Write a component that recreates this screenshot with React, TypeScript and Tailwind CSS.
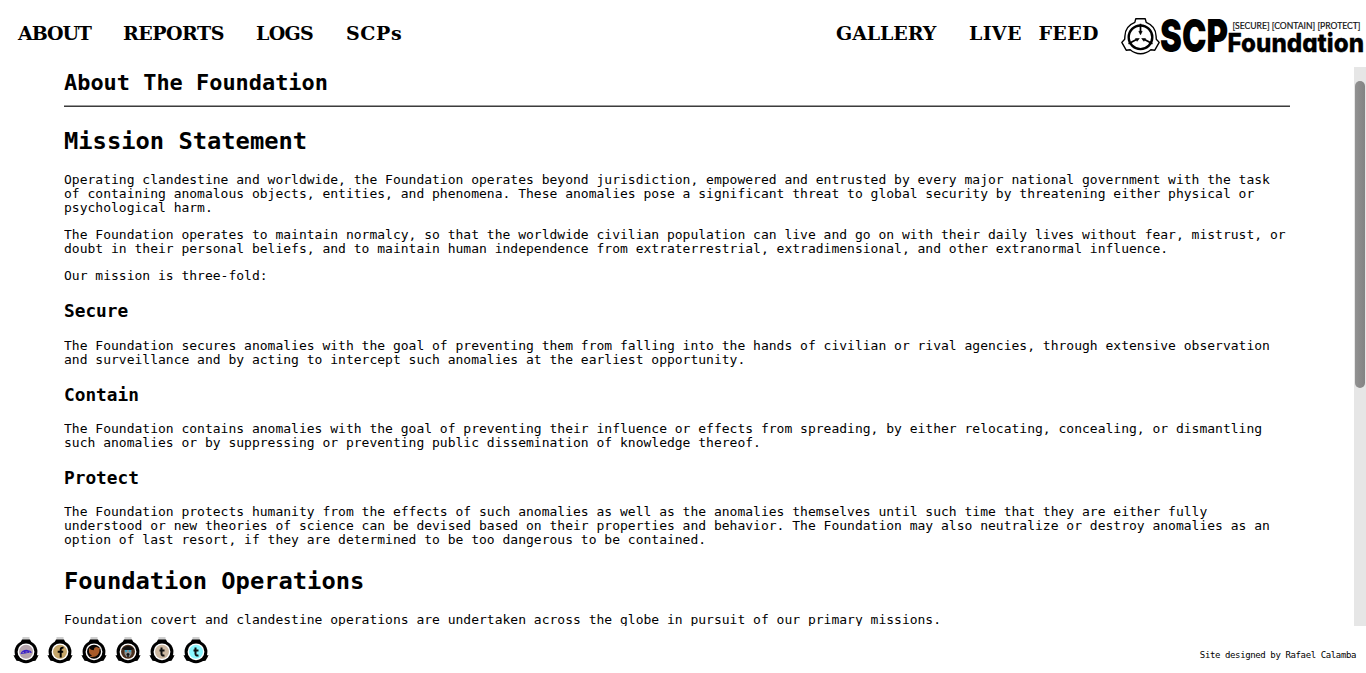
import type { ReactNode } from 'react';

const Emblem = () => (
  <g fill="none" stroke="#000" strokeLinejoin="round">
    <path
      d="M15.800.9h9.400l1 3.700c5.900 2.300 9.800 7.500 9.900 13.900l.2 2.900 2.900 3.200-4.400 7.800-4-.5c-6 5.300-14.600 5.300-20.600 0l-4 .5-4.400-7.800 2.900-3.200.2-2.900c.1-6.400 4-11.600 9.900-13.900z"
      strokeWidth="1.400"
    />
    <circle cx="20.500" cy="19.500" r="11.800" strokeWidth="2.400" />
    <g strokeWidth="1.700" fill="#000">
      <path d="M20.500 6v9M32.500 26l-8-4.400M8.500 26l8-4.400" />
      <path d="M18.800 13.500h3.400l-1.700 3.500zM25.500 20.800l-1.600 2.700-2.200-2.800zM15.500 20.800l1.600 2.700 2.200-2.800z" strokeWidth=".6" />
    </g>
  </g>
);

const Logo = () => (
  <svg width="246" height="44" viewBox="0 0 246 44" className="block overflow-visible" role="img">
    <g transform="translate(0 3.800)">
      <Emblem />
    </g>
    <text x="40" y="38.300" textLength="68" lengthAdjust="spacingAndGlyphs" fontFamily="Inter, sans-serif" fontWeight="900" fontSize="45">SCP</text>
    <text x="112.500" y="14.500" textLength="128" lengthAdjust="spacingAndGlyphs" fontFamily="Lato, sans-serif" fontSize="9.300" fontWeight="400" fill="#111" stroke="#111" strokeWidth=".2">[SECURE] [CONTAIN] [PROTECT]</text>
    <text x="107.500" y="38.300" textLength="136.500" lengthAdjust="spacingAndGlyphs" className="[font-feature-settings:'cv11','ss03']" fontFamily="Inter, sans-serif" fontWeight="800" fontSize="26" stroke="#000" strokeWidth=".3">Foundation</text>
  </svg>
);

const Badge = ({ fill, children }: { fill: string; children: ReactNode }) => (
  <svg width="26" height="28" viewBox="0 0 26 28" className="block">
    <path d="M9.500 0h7v3h-7z" fill="#cfcfcf" />
    <path d="M0 18.500h26" stroke="#bbb" strokeWidth="1" />
    <path d="M9 2.600h8l1.500 3h-11zM1.300 18.300l3.700-1 4.500 7.500-3.800-.8-2.200-.2-2.500-4.300zM24.700 18.300l-3.700-1-4.500 7.500 3.800-.8 2.200-.2 2.500-4.300z" fill="#000" />
    <circle cx="13" cy="14.800" r="11.400" fill="#000" />
    <circle cx="13" cy="14.800" r="8.400" fill="#fff" />
    <circle cx="13" cy="14.800" r="7" fill={fill} />
    {children}
  </svg>
);

const NavItem = ({ children, className }: { children: string; className: string }) => (
  <a className={`block shrink-0 whitespace-nowrap ${className}`}>{children}</a>
);

const Title = ({ children }: { children: string }) => (
  <h1 className="text-[23.75px] leading-[26px] font-bold whitespace-nowrap">{children}</h1>
);

const Sub = ({ children }: { children: string }) => (
  <h2 className="mt-[18px] text-[17.8px] leading-5 font-bold">{children}</h2>
);

const Para = ({ lines, className }: { lines: string[]; className: string }) => (
  <p className={`text-[13px] leading-[14px] tracking-[0.004px] whitespace-nowrap ${className}`}>
    {lines.map((line) => (
      <span key={line} className="block">{line}</span>
    ))}
  </p>
);

export default function App() {
  return (
    <div className="flex h-[673px] w-[1366px] flex-col overflow-hidden bg-white font-['DejaVu_Sans_Mono',monospace] text-black">
      <header className="flex h-[67px] shrink-0 items-start justify-between">
        <nav className="flex pt-[19px] pl-[18px] font-['DejaVu_Serif',serif] text-[19px] leading-7 font-bold">
          <NavItem className="w-[105px] tracking-[-1.1px]">ABOUT</NavItem>
          <NavItem className="w-[133px] tracking-[-0.5px]">REPORTS</NavItem>
          <NavItem className="w-[90px] tracking-[-0.7px]">LOGS</NavItem>
          <NavItem className="w-[70px] tracking-[0.6px]">SCPs</NavItem>
        </nav>
        <div className="flex">
          <nav className="flex pt-[19px] font-['DejaVu_Serif',serif] text-[19px] leading-7 font-bold">
            <NavItem className="w-[133px] tracking-[-0.1px]">GALLERY</NavItem>
            <NavItem className="w-[151px] tracking-[0.3px] [word-spacing:10px]">LIVE FEED</NavItem>
          </nav>
          <div className="pt-[14px]">
            <Logo />
          </div>
        </div>
      </header>
      <main className="flex h-[559px] shrink-0 justify-between overflow-hidden">
        <article className="ml-16 h-full w-[1226px] overflow-hidden pt-[2px]">
          <h1 className="text-[21.93px] leading-7 font-bold">About The Foundation</h1>
          <hr className="mt-2 h-[2px] border-t border-b border-t-[#9a9a9a] border-b-[#3c3c3c]" />
          <div className="mt-[21px]">
            <Title>Mission Statement</Title>
          </div>
          <Para
            className="mt-[19px]"
            lines={[
              'Operating clandestine and worldwide, the Foundation operates beyond jurisdiction, empowered and entrusted by every major national government with the task',
              'of containing anomalous objects, entities, and phenomena. These anomalies pose a significant threat to global security by threatening either physical or',
              'psychological harm.',
            ]}
          />
          <Para
            className="mt-[13px]"
            lines={[
              'The Foundation operates to maintain normalcy, so that the worldwide civilian population can live and go on with their daily lives without fear, mistrust, or',
              'doubt in their personal beliefs, and to maintain human independence from extraterrestrial, extradimensional, and other extranormal influence.',
            ]}
          />
          <Para className="mt-[13px]" lines={['Our mission is three-fold:']} />
          <Sub>Secure</Sub>
          <Para
            className="mt-[18px]"
            lines={[
              'The Foundation secures anomalies with the goal of preventing them from falling into the hands of civilian or rival agencies, through extensive observation',
              'and surveillance and by acting to intercept such anomalies at the earliest opportunity.',
            ]}
          />
          <Sub>Contain</Sub>
          <Para
            className="mt-[17px]"
            lines={[
              'The Foundation contains anomalies with the goal of preventing their influence or effects from spreading, by either relocating, concealing, or dismantling',
              'such anomalies or by suppressing or preventing public dissemination of knowledge thereof.',
            ]}
          />
          <Sub>Protect</Sub>
          <Para
            className="mt-[17px]"
            lines={[
              'The Foundation protects humanity from the effects of such anomalies as well as the anomalies themselves until such time that they are either fully',
              'understood or new theories of science can be devised based on their properties and behavior. The Foundation may also neutralize or destroy anomalies as an',
              'option of last resort, if they are determined to be too dangerous to be contained.',
            ]}
          />
          <div className="mt-[21px]">
            <Title>Foundation Operations</Title>
          </div>
          <Para
            className="mt-[19px]"
            lines={['Foundation covert and clandestine operations are undertaken across the globe in pursuit of our primary missions.']}
          />
        </article>
        <div className="h-full w-3 bg-[#e6e6e6] px-px pt-[14px]">
          <div className="h-[307px] rounded-full bg-linear-to-r from-[#929292] to-[#838383]" />
        </div>
      </main>
      <footer className="flex flex-1 justify-between pr-[10px] pl-[13px]">
        <div className="flex gap-2 pt-[11px]">
          <Badge fill="#b5a5ad">
            <path d="M7.500 17c1-4 6-5 8.500-3.500 2 .2 3 1.500 2.500 2.500-3-1-7 1-11 1z" fill="#3a20c8" />
            <path d="M9.500 15.500h1.500M12.500 15h2M16 15.200h1" stroke="#b5a5ad" strokeWidth=".7" />
          </Badge>
          <Badge fill="#c5a66a">
            <path d="M16.500 10.800c-2-.4-2.800.4-2.800 2v7.700M10.700 14.800h5.500" fill="none" stroke="#000" strokeWidth="2" />
          </Badge>
          <Badge fill="#090604">
            <path d="M8 11c1.500 1.700 3 2.200 4.800 2.200 0-3 3-4 4.700-2.200l2-.4-1 2c.3 6-5.300 9-10.500 6.600 1.500 0 2.300-.4 3-1-2-.5-2.800-2-3-3.200z" fill="#a85a28" />
          </Badge>
          <Badge fill="#4b301d">
            <path d="M7 12c4-4 8-4 12 0l-3 1h-6z" fill="#111" />
            <path d="M9.500 13h7v4l-2 3h-3l-2-3z" fill="#8b9294" />
            <path d="M10 14h2M14 14h2" stroke="#27a9d2" strokeWidth="1.500" />
            <path d="M13 16v4M11.500 17.500h3" stroke="#111" strokeWidth="1.500" />
          </Badge>
          <Badge fill="#cdb9a2">
            <path d="M12.500 10.500v6.300c0 1.800 1.200 2 3 1.600M10.500 13.500h5" fill="none" stroke="#111" strokeWidth="2" />
          </Badge>
          <Badge fill="#8cf7ff">
            <path d="M12.500 10.500v6.300c0 1.800 1.200 2 3 1.600M10.500 13.500h5" fill="none" stroke="#111" strokeWidth="2" />
          </Badge>
        </div>
        <p className="pt-[23px] text-[9px] leading-3 tracking-[-0.382px] whitespace-nowrap">Site designed by Rafael Calamba</p>
      </footer>
    </div>
  );
}
